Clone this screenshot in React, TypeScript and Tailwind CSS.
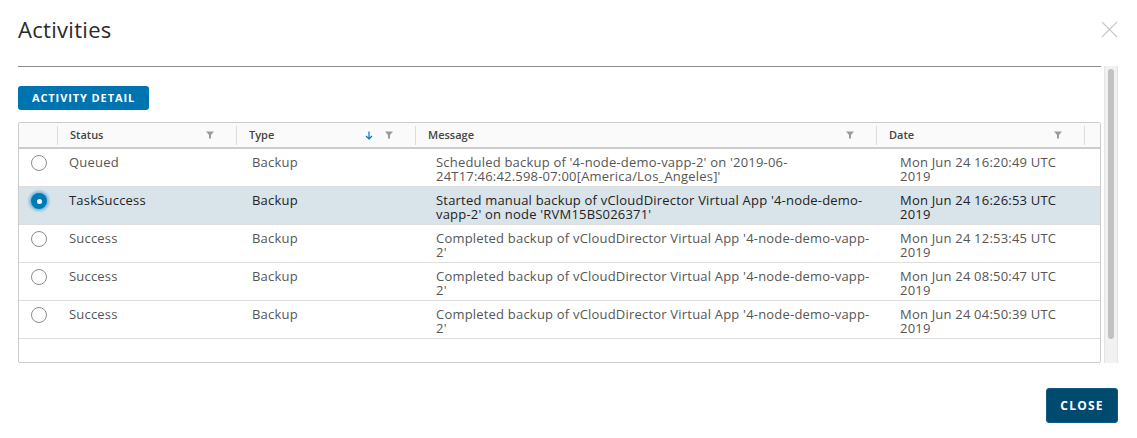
import React from 'react';

type Activity = {
  status: string;
  type: string;
  message: string[];
  date: string[];
};

const activities: Activity[] = [
  {
    status: 'Queued',
    type: 'Backup',
    message: [
      "Scheduled backup of '4-node-demo-vapp-2' on '2019-06-",
      "24T17:46:42.598-07:00[America/Los_Angeles]'",
    ],
    date: ['Mon Jun 24 16:20:49 UTC', '2019'],
  },
  {
    status: 'TaskSuccess',
    type: 'Backup',
    message: [
      "Started manual backup of vCloudDirector Virtual App '4-node-demo-",
      "vapp-2' on node 'RVM15BS026371'",
    ],
    date: ['Mon Jun 24 16:26:53 UTC', '2019'],
  },
  {
    status: 'Success',
    type: 'Backup',
    message: ["Completed backup of vCloudDirector Virtual App '4-node-demo-vapp-", "2'"],
    date: ['Mon Jun 24 12:53:45 UTC', '2019'],
  },
  {
    status: 'Success',
    type: 'Backup',
    message: ["Completed backup of vCloudDirector Virtual App '4-node-demo-vapp-", "2'"],
    date: ['Mon Jun 24 08:50:47 UTC', '2019'],
  },
  {
    status: 'Success',
    type: 'Backup',
    message: ["Completed backup of vCloudDirector Virtual App '4-node-demo-vapp-", "2'"],
    date: ['Mon Jun 24 04:50:39 UTC', '2019'],
  },
];

const FilterIcon = () => (
  <svg width="8" height="8" viewBox="0 0 8 8" className="shrink-0">
    <path d="M0 0.5h8L5 4v3.5H3V4z" fill="#9a9a9a" />
  </svg>
);

const SortArrow = () => (
  <svg width="8" height="9" viewBox="0 0 8 9" className="shrink-0">
    <path d="M4 0.5v7.5M1 5l3 3 3-3" fill="none" stroke="#0079b8" strokeWidth="1.2" />
  </svg>
);

const HeaderCell: React.FC<{ label: string; width: string; sorted?: boolean }> = ({
  label,
  width,
  sorted,
}) => (
  <div className={`${width} h-full flex items-center`}>
    <div className="w-px h-[19px] bg-[#dddddd]" />
    <div className="flex-1 flex items-center pl-[12px] pr-[22px]">
      <span className="flex-1 text-[11px] leading-[14px] font-semibold text-[#454545]">{label}</span>
      {sorted && (
        <span className="mr-[12px] flex">
          <SortArrow />
        </span>
      )}
      <FilterIcon />
    </div>
  </div>
);

const Radio: React.FC<{ checked: boolean }> = ({ checked }) =>
  checked ? (
    <div className="w-[16px] h-[16px] rounded-full bg-[#0079b8] shadow-[0_0_3px_2px_rgba(0,121,184,0.45)] flex items-center justify-center">
      <div className="w-[5px] h-[5px] rounded-full bg-white" />
    </div>
  ) : (
    <div className="w-[16px] h-[16px] rounded-full border border-[#8c8c8c] bg-white" />
  );

export default function App() {
  const selected = 1;
  return (
    <div
      className="w-[1137px] h-[438px] bg-white flex flex-col text-[#565656]"
      style={{ fontFamily: '"Open Sans", "Liberation Sans", sans-serif' }}
    >
      {/* Title */}
      <div className="h-[66px] flex items-start justify-between pl-[18px] pr-[19px] pt-[14px]">
        <h1 className="text-[22px] leading-[30px] tracking-[0.3px] text-[#2a2a2a] font-normal">Activities</h1>
        <svg width="17" height="17" viewBox="0 0 17 17" className="mt-[7px]">
          <path d="M1 1l15 15M16 1L1 16" stroke="#c8c8c8" strokeWidth="1.1" />
        </svg>
      </div>

      {/* Body */}
      <div className="flex pl-[18px] pr-[19px] h-[297px]">
        <div className="w-[1083px] border-t border-[#8c8c8c] pt-[19px]">
          <button className="block h-[24px] w-[131px] rounded-[3px] bg-[#0073b1] text-white text-[11px] leading-[24px] font-bold tracking-[0.9px]">
            ACTIVITY DETAIL
          </button>

          <div className="mt-[12px] h-[241px] border border-[#cccccc] rounded-[2px] flex flex-col">
            {/* Header */}
            <div className="h-[26px] shrink-0 bg-[#fafafa] border-b-2 border-[#cccccc] flex">
              <div className="w-[38px]" />
              <HeaderCell label="Status" width="w-[179px]" />
              <HeaderCell label="Type" width="w-[179px]" sorted />
              <HeaderCell label="Message" width="w-[461px]" />
              <HeaderCell label="Date" width="w-[208px]" />
              <div className="flex-1 h-full flex items-center">
                <div className="w-px h-[19px] bg-[#dddddd]" />
              </div>
            </div>

            {/* Rows */}
            {activities.map((a, i) => (
              <div
                key={i}
                className={`h-[38px] shrink-0 border-b border-[#dddddd] flex text-[13px] leading-[14px] tracking-[0.2px] ${
                  i === selected ? 'bg-[#d9e4ea] text-[#222222]' : 'text-[#565656]'
                }`}
              >
                <div className="w-[38px] flex justify-center pt-[6px] pl-[2px]">
                  <Radio checked={i === selected} />
                </div>
                <div className="w-[183px] pl-[12px] pt-[6px]">{a.status}</div>
                <div className="w-[184px] pl-[12px] pt-[6px]">{a.type}</div>
                <div className="w-[464px] pl-[12px] pt-[6px]">
                  {a.message.map((m, j) => (
                    <div key={j}>{m}</div>
                  ))}
                </div>
                <div className="flex-1 pl-[12px] pt-[6px]">
                  {a.date.map((d, j) => (
                    <div key={j}>{d}</div>
                  ))}
                </div>
              </div>
            ))}
          </div>
        </div>

        {/* Scrollbar */}
        <div className="ml-[3px] w-[14px] h-full bg-[#f1f1f1] border-x border-[#e4e4e4] pt-[3px] px-[3px]">
          <div className="h-[270px] rounded-full bg-[#c1c1c1]" />
        </div>
      </div>

      {/* Footer */}
      <div className="flex justify-end pr-[19px] pt-[25px]">
        <button className="block h-[35px] w-[72px] rounded-[3px] bg-[#004a70] border border-[#0d5c85] text-white text-[12px] font-bold tracking-[1.2px]">
          CLOSE
        </button>
      </div>
    </div>
  );
}
